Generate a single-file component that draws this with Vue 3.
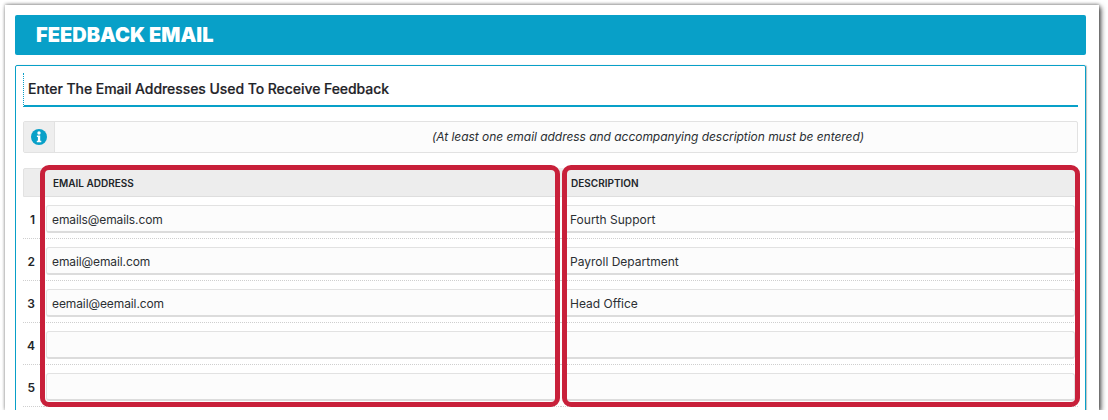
<script setup>
const rows = [
  { n: 1, email: 'emails@emails.com', desc: 'Fourth Support' },
  { n: 2, email: 'email@email.com', desc: 'Payroll Department' },
  { n: 3, email: 'eemail@eemail.com', desc: 'Head Office' },
  { n: 4, email: '', desc: '' },
  { n: 5, email: '', desc: '' }
]
</script>

<template>
  <div class="sheet">
    <div class="banner">FEEDBACK EMAIL</div>
    <section class="panel">
      <h2 class="title">Enter The Email Addresses Used To Receive Feedback</h2>
      <div class="info">
        <div class="info-icon">
          <svg width="16" height="16" viewBox="0 0 16 16" aria-hidden="true">
            <circle cx="8" cy="8" r="8" fill="#08a0c8" />
            <circle cx="8" cy="4" r="1.7" fill="#fff" />
            <path d="M5.9 6.6h3.3v5.2h1.1v1.5H5.8v-1.5h1.1V8.1h-1z" fill="#fff" />
          </svg>
        </div>
        <div class="info-text">(At least one email address and accompanying description must be entered)</div>
      </div>
      <div class="table">
        <div class="head-blank"></div>
        <div class="head head-email">EMAIL ADDRESS</div>
        <div class="head head-desc">DESCRIPTION</div>
        <div v-for="r in rows" :key="r.n" class="row">
          <div class="num">{{ r.n }}</div>
          <div class="field field-email">{{ r.email }}</div>
          <div class="field field-desc">{{ r.desc }}</div>
        </div>
        <div class="mark mark-email"></div>
        <div class="mark mark-desc"></div>
      </div>
    </section>
  </div>
</template>

<style>
html, body { margin: 0; overflow: hidden; background: #fff; }
</style>

<style scoped>
.sheet {
  box-sizing: border-box;
  width: 1094px;
  height: 405px;
  margin: 5px 0 0 5px;
  padding: 10px 13px 0 10px;
  background: #fff;
  box-shadow: 2px 2px 5px 0 rgba(0,0,0,.7), 0 -1px 3px rgba(0,0,0,.3);
  font-family: Inter, sans-serif;
  color: #212529;
  overflow: hidden;
}
.banner {
  box-sizing: border-box;
  height: 40px;
  padding-left: 21px;
  background: #08a0c8;
  border-radius: 2px;
  color: #fff;
  font-size: 20px;
  font-weight: 900;
  line-height: 40px;
}
.panel {
  box-sizing: border-box;
  height: 400px;
  margin-top: 10px;
  padding: 7px 7px 0;
  border: 1px solid #08a0c8;
  border-radius: 2px;
  box-shadow: 1px 0 1px rgba(0,0,0,.25);
}
.title {
  box-sizing: border-box;
  height: 34px;
  margin: 0;
  padding-left: 4px;
  border-left: 1px dotted #08a0c8;
  border-bottom: 2px solid #08a0c8;
  font-size: 14px;
  font-weight: 500;
  line-height: 32px;
  letter-spacing: -0.06px;
  color: #1f2328;
  -webkit-text-stroke: 0.2px #1f2328;
}
.info {
  display: flex;
  box-sizing: border-box;
  height: 32px;
  margin-top: 14px;
  border: 1px solid #e2e2e2;
  border-radius: 2px;
  background: #fcfcfc;
}
.info-icon {
  display: flex;
  align-items: center;
  justify-content: center;
  width: 30px;
  background: #eeeeee;
  border-right: 1px solid #e2e2e2;
}
.info-text {
  flex: 1;
  padding-left: 164px;
  text-align: center;
  font-size: 12px;
  font-style: italic;
  line-height: 30px;
  letter-spacing: -0.04px;
  color: #2b2f33;
}
.table {
  position: relative;
  display: grid;
  grid-template-columns: 21px 517px 1fr;
  margin-top: 15px;
}
.head-blank, .head {
  height: 29px;
  background: #ededed;
  border-bottom: 1px solid #dedede;
  box-sizing: border-box;
}
.head-blank { border: 1px solid #e2e2e2; border-radius: 2px 0 0 0; }
.head {
  font-size: 10px;
  font-weight: 600;
  line-height: 30px;
  color: #212529;
}
.head-email { padding-left: 9px; }
.head-desc { padding-left: 10px; }
.row {
  display: contents;
}
.num {
  height: 42px;
  padding-top: 9px;
  box-sizing: border-box;
  font-size: 12px;
  font-weight: 600;
  line-height: 27px;
  text-align: right;
  padding-right: 9px;
  border-bottom: 1px dotted #cfcfcf;
}
.field {
  height: 42px;
  box-sizing: border-box;
  border-bottom: 1px dotted #cfcfcf;
  position: relative;
  font-size: 12px;
  line-height: 27px;
  padding-top: 9px;
  color: #2b2f33;
  background: linear-gradient(#fcfcfc, #fcfcfc) no-repeat;
  background-size: 100% 27px;
  background-position: 0 9px;
}
.field::before {
  content: '';
  position: absolute;
  left: 2px;
  right: 3px;
  top: 8px;
  height: 28px;
  box-sizing: border-box;
  border: 1px solid #e2e2e2;
  border-bottom: 2px solid #dcdcdc;
  border-radius: 3px;
}
.field-email { padding-left: 8px; letter-spacing: -0.1px; }
.field-desc { padding-left: 9px; }
.mark {
  position: absolute;
  top: -3px;
  height: 242px;
  box-sizing: border-box;
  border: 5px solid #c8203a;
  border-radius: 9px;
  pointer-events: none;
}
.mark-email { left: 17px; width: 520px; }
.mark-desc { left: 539px; width: 518px; }
</style>
